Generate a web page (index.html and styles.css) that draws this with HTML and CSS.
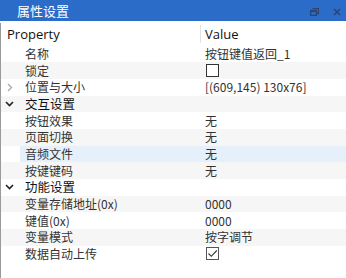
FILE: index.html
```html
<!DOCTYPE html>
<html lang="zh-CN">
<head>
    <meta charset="UTF-8">
    <title>属性设置</title>
    <link rel="stylesheet" href="styles.css">
</head>
<body>
    <div class="panel">
        <!-- Dock title -->
        <div class="titlebar">
            <span class="title">属性设置</span>
            <div class="title-buttons">
                <svg class="tb-icon" width="9" height="8" viewBox="0 0 9 8">
                    <path d="M2.5 0.5h6v5h-2" fill="none" stroke="#2b3f63" stroke-width="1.3"/>
                    <rect x="0.6" y="2.6" width="5.8" height="4.8" fill="none" stroke="#2b3f63" stroke-width="1.3"/>
                    <path d="M0.6 3.2h5.8" stroke="#2b3f63" stroke-width="1.3"/>
                </svg>
                <svg class="tb-icon" width="8" height="8" viewBox="0 0 8 8">
                    <path d="M1 1L7 7M7 1L1 7" stroke="#2b3f63" stroke-width="1.5"/>
                </svg>
            </div>
        </div>

        <div class="browser">
            <div class="header">
                <div class="col-prop">Property</div>
                <div class="col-value">Value</div>
            </div>

            <div class="row">
                <span class="gutter"></span><span class="name">名称</span><span class="value">按钮键值返回_1</span>
            </div>
            <div class="row alt">
                <span class="gutter"></span><span class="name">锁定</span><span class="value"><span class="check"></span></span>
            </div>
            <div class="row">
                <span class="gutter">
                    <svg width="6" height="9" viewBox="0 0 6 9"><path d="M1 1l3.5 3.5L1 8" fill="none" stroke="#a8a8a8" stroke-width="1.3"/></svg>
                </span><span class="name">位置与大小</span><span class="value">[(609,145) 130x76]</span>
            </div>
            <div class="row alt group">
                <span class="gutter">
                    <svg width="9" height="6" viewBox="0 0 9 6"><path d="M1 1l3.5 3.5L8 1" fill="none" stroke="#222" stroke-width="1.6"/></svg>
                </span><span class="name">交互设置</span><span class="value"></span>
            </div>
            <div class="row">
                <span class="gutter"></span><span class="name">按钮效果</span><span class="value">无</span>
            </div>
            <div class="row alt">
                <span class="gutter"></span><span class="name">页面切换</span><span class="value">无</span>
            </div>
            <div class="row selected">
                <span class="gutter"></span><span class="name">音频文件</span><span class="value">无</span>
            </div>
            <div class="row alt">
                <span class="gutter"></span><span class="name">按键键码</span><span class="value">无</span>
            </div>
            <div class="row group">
                <span class="gutter">
                    <svg width="9" height="6" viewBox="0 0 9 6"><path d="M1 1l3.5 3.5L8 1" fill="none" stroke="#222" stroke-width="1.6"/></svg>
                </span><span class="name">功能设置</span><span class="value"></span>
            </div>
            <div class="row alt">
                <span class="gutter"></span><span class="name">变量存储地址(0x)</span><span class="value">0000</span>
            </div>
            <div class="row">
                <span class="gutter"></span><span class="name">键值(0x)</span><span class="value">0000</span>
            </div>
            <div class="row alt">
                <span class="gutter"></span><span class="name">变量模式</span><span class="value">按字调节</span>
            </div>
            <div class="row">
                <span class="gutter"></span><span class="name">数据自动上传</span><span class="value"><span class="check checked">
                    <svg width="11" height="9" viewBox="0 0 11 9"><path d="M1.5 4.5l2.8 2.8L9.8 1.5" fill="none" stroke="#333" stroke-width="1.1"/></svg>
                </span></span>
            </div>
        </div>
    </div>
</body>
</html>
```

FILE: styles.css
```css
* {
    box-sizing: border-box;
}
body {
    margin: 0;
    background-color: #fff;
    font-family: "Noto Sans CJK SC", "Noto Sans", sans-serif;
    font-size: 12px;
    color: #222;
}
.panel {
    width: 346px;
    height: 278px;
    display: flex;
    flex-direction: column;
    overflow: hidden;
}
.titlebar {
    height: 21px;
    flex-shrink: 0;
    background-color: #2c6cc9;
    display: flex;
    align-items: center;
    justify-content: space-between;
    padding: 0 5px 0 17px;
}
.title {
    color: #fff;
    font-size: 13px;
    line-height: 21px;
}
.title-buttons {
    display: flex;
    align-items: center;
    gap: 14px;
    padding-top: 2px;
}
.tb-icon {
    display: block;
    opacity: 0.85;
}
.browser {
    flex: 1;
    margin-top: 2px;
    border-left: 1px solid #9a9a9a;
}
.header {
    height: 22.67px;
    display: grid;
    grid-template-columns: 200px 1fr;
    align-items: center;
    font-family: "Open Sans", "Noto Sans", sans-serif;
    font-size: 13px;
    color: #111;
}
.col-prop {
    padding-left: 6px;
    border-right: 1px solid #e2e2e2;
    height: 18px;
    line-height: 18px;
}
.col-value {
    padding-left: 4px;
    line-height: 18px;
}
.row {
    height: 16.67px;
    display: grid;
    grid-template-columns: 19px 181px 1fr;
    align-items: center;
    line-height: 16px;
    color: #333;
}
.row.alt {
    background-color: #f6f6f6;
}
.row.selected {
    background: linear-gradient(to right, #fff 19px, #e6f0fa 19px);
}
.gutter {
    height: 100%;
    display: flex;
    align-items: center;
    justify-content: center;
    padding-right: 2px;
}
.name {
    padding-left: 5px;
    white-space: nowrap;
}
.group .name {
    color: #111;
    font-size: 12.5px;
}
.value {
    padding-left: 4px;
    white-space: nowrap;
    display: flex;
    align-items: center;
}
.check {
    display: inline-block;
    width: 13px;
    height: 13px;
    border: 1px solid #333;
    background-color: #fff;
    margin-left: 1px;
}
.check.checked {
    border-color: #555;
    display: flex;
    align-items: center;
    justify-content: center;
}
.check.checked svg {
    display: block;
}
```
